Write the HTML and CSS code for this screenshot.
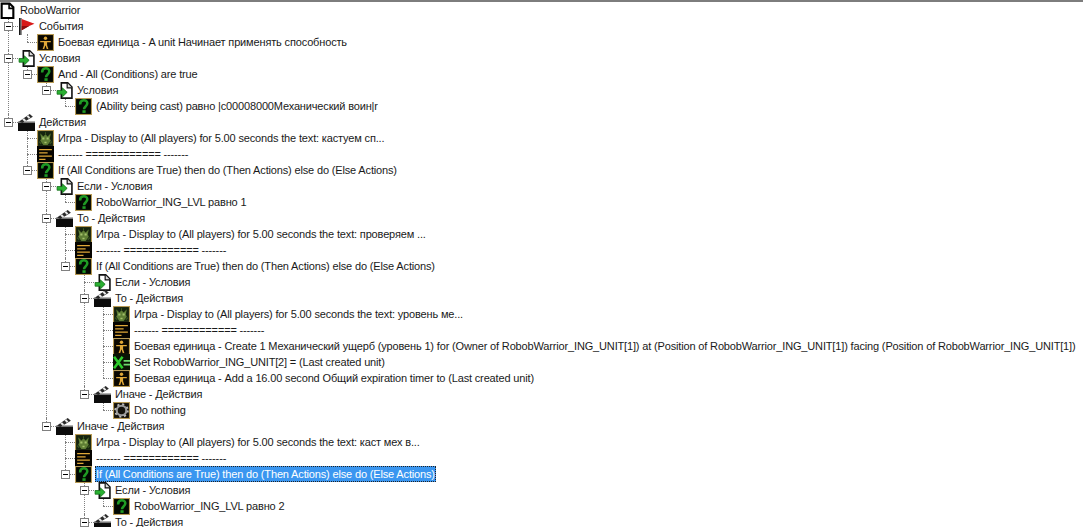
FILE: index.html
```html
<!DOCTYPE html>
<html lang="ru">
<head>
<meta charset="utf-8">
<title>RoboWarrior</title>
<link rel="stylesheet" href="styles.css">
</head>
<body>
<svg class="defs" width="0" height="0" aria-hidden="true">
  <symbol id="i-page" viewBox="0 0 16 16"><path d="M2.500 1.500h7.500l3.500 3.500v10h-11z" fill="#fff" stroke="#000" stroke-width="2"/><path d="M9.500 1.500v4.500h4" fill="none" stroke="#000" stroke-width="1.500"/></symbol>
  <symbol id="i-flag" viewBox="0 0 16 16"><rect x="1" y="0" width="2.500" height="16" fill="#666"/><rect x="1" y="0" width="1" height="16" fill="#111"/><path d="M3.500 1l12 4.500-5 2-7 4z" fill="#d81a1a"/><path d="M3.500 7.500l7 0-7 4z" fill="#8f0d0d"/></symbol>
  <symbol id="i-unit" viewBox="0 0 16 16"><rect x=".5" y=".5" width="15" height="15" fill="#0b0800" stroke="#b79a55"/><circle cx="8" cy="4" r="1.600" fill="#e0a838"/><path d="M3 6.500h10v1.200h-3.500v2.800l1.200 3.500h-1.500l-1.200-3.300-1.200 3.300h-1.500l1.200-3.500v-2.800h-3.500z" fill="#e0a838"/></symbol>
  <symbol id="i-q" viewBox="0 0 16 16"><rect x=".5" y=".5" width="15" height="15" fill="#020802" stroke="#b79a55"/><path d="M4.800 6c0-5 6.800-4.800 6.800-1 0 3-3.100 3-3.100 5.500" fill="none" stroke="#1f9a24" stroke-width="2.400"/><rect x="7" y="11.500" width="3" height="2.500" fill="#1f9a24"/></symbol>
  <symbol id="i-cond" viewBox="0 0 16 16"><path d="M5 .8h6l4 4v10.400h-10z" fill="#fff" stroke="#111" stroke-width="1.500"/><path d="M10.500 1v4.500h4.500" fill="#ddd" stroke="#111" stroke-width="1.100"/><path d="M1 8h5v-2.500l4.500 4.200-4.500 4.300v-2.500h-5z" fill="#2ab032" stroke="#0c6a12" stroke-width=".7"/></symbol>
  <symbol id="i-act" viewBox="0 0 16 16"><rect x="0" y="8" width="16" height="8" fill="#0c0c0c"/><rect x="0" y="7" width="16" height="1.500" fill="#777"/><path d="M1 7l10-7 3 2.500-10 6z" fill="#2a2a2a"/><path d="M4 5l2 2.200 1.700-1-2-2.300zM8 2.200l2 2.300 1.700-1-2-2.400z" fill="#e8e8e8"/></symbol>
  <symbol id="i-game" viewBox="0 0 16 16"><rect x=".5" y=".5" width="15" height="15" fill="#16240e" stroke="#b79a55"/><path d="M3 3l3 3 2-2 2 2 3-3-1 5 1 2-3 4h-4l-3-4 1-2z" fill="#5e7d34"/><path d="M5 7h2v2h-2zM9 7h2v2h-2zM7 11h2v1.500h-2z" fill="#a5c26b"/><path d="M2 11l2 2M14 11l-2 2M8 2v2" stroke="#3c5a22"/></symbol>
  <symbol id="i-note" viewBox="0 0 16 16"><rect width="16" height="16" fill="#060400"/><path d="M2 3.500h12M2 6.500h8M2 9.500h12M2 12.500h6" stroke="#e0a838" stroke-width="1.200"/></symbol>
  <symbol id="i-set" viewBox="0 0 16 16"><rect width="16" height="16" fill="#0a1404"/><path d="M1 2.500l8 11M9 2.500l-8 11" stroke="#2dcc2d" stroke-width="2.400"/><path d="M10 6.500h6M10 10h6" stroke="#6fd86f" stroke-width="1.600"/></symbol>
  <symbol id="i-gear" viewBox="0 0 16 16"><rect x=".5" y=".5" width="15" height="15" fill="#14120c" stroke="#b79a55"/><circle cx="8" cy="8" r="4.500" fill="none" stroke="#9a9a9a" stroke-width="2"/><circle cx="8" cy="8" r="6" fill="none" stroke="#bdbdbd" stroke-width="1.600" stroke-dasharray="2 2.700"/></symbol>
</svg>
<main class="panel">
<ul class="tree root">
<li>
  <div class="row"><svg class="icon"><use href="#i-page"/></svg><span class="label">RoboWarrior</span></div>
  <ul class="tree">
    <li>
      <div class="row"><span class="exp"></span><svg class="icon"><use href="#i-flag"/></svg><span class="label">События</span></div>
      <ul class="tree">
        <li><div class="row"><svg class="icon"><use href="#i-unit"/></svg><span class="label">Боевая единица - A unit Начинает применять способность</span></div></li>
      </ul>
    </li>
    <li>
      <div class="row"><span class="exp"></span><svg class="icon"><use href="#i-cond"/></svg><span class="label">Условия</span></div>
      <ul class="tree">
        <li>
          <div class="row"><span class="exp"></span><svg class="icon"><use href="#i-q"/></svg><span class="label">And - All (Conditions) are true</span></div>
          <ul class="tree">
            <li>
              <div class="row"><span class="exp"></span><svg class="icon"><use href="#i-cond"/></svg><span class="label">Условия</span></div>
              <ul class="tree">
                <li><div class="row"><svg class="icon"><use href="#i-q"/></svg><span class="label">(Ability being cast) равно |c00008000Механический воин|r</span></div></li>
              </ul>
            </li>
          </ul>
        </li>
      </ul>
    </li>
    <li>
      <div class="row"><span class="exp"></span><svg class="icon"><use href="#i-act"/></svg><span class="label">Действия</span></div>
      <ul class="tree">
        <li><div class="row"><svg class="icon"><use href="#i-game"/></svg><span class="label">Игра - Display to (All players) for 5.00 seconds the text: кастуем сп...</span></div></li>
        <li><div class="row"><svg class="icon"><use href="#i-note"/></svg><span class="label">------- ============ -------</span></div></li>
        <li>
          <div class="row"><span class="exp"></span><svg class="icon"><use href="#i-q"/></svg><span class="label">If (All Conditions are True) then do (Then Actions) else do (Else Actions)</span></div>
          <ul class="tree">
            <li>
              <div class="row"><span class="exp"></span><svg class="icon"><use href="#i-cond"/></svg><span class="label">Если - Условия</span></div>
              <ul class="tree">
                <li><div class="row"><svg class="icon"><use href="#i-q"/></svg><span class="label">RoboWarrior_ING_LVL равно 1</span></div></li>
              </ul>
            </li>
            <li>
              <div class="row"><span class="exp"></span><svg class="icon"><use href="#i-act"/></svg><span class="label">То - Действия</span></div>
              <ul class="tree">
                <li><div class="row"><svg class="icon"><use href="#i-game"/></svg><span class="label">Игра - Display to (All players) for 5.00 seconds the text: проверяем ...</span></div></li>
                <li><div class="row"><svg class="icon"><use href="#i-note"/></svg><span class="label">------- ============ -------</span></div></li>
                <li>
                  <div class="row"><span class="exp"></span><svg class="icon"><use href="#i-q"/></svg><span class="label">If (All Conditions are True) then do (Then Actions) else do (Else Actions)</span></div>
                  <ul class="tree">
                    <li><div class="row"><svg class="icon"><use href="#i-cond"/></svg><span class="label">Если - Условия</span></div></li>
                    <li>
                      <div class="row"><span class="exp"></span><svg class="icon"><use href="#i-act"/></svg><span class="label">То - Действия</span></div>
                      <ul class="tree">
                        <li><div class="row"><svg class="icon"><use href="#i-game"/></svg><span class="label">Игра - Display to (All players) for 5.00 seconds the text: уровень ме...</span></div></li>
                        <li><div class="row"><svg class="icon"><use href="#i-note"/></svg><span class="label">------- ============ -------</span></div></li>
                        <li><div class="row"><svg class="icon"><use href="#i-unit"/></svg><span class="label">Боевая единица - Create 1 Механический ущерб (уровень 1) for (Owner of RobobWarrior_ING_UNIT[1]) at (Position of RobobWarrior_ING_UNIT[1]) facing (Position of RobobWarrior_ING_UNIT[1])</span></div></li>
                        <li><div class="row"><svg class="icon"><use href="#i-set"/></svg><span class="label">Set RobobWarrior_ING_UNIT[2] = (Last created unit)</span></div></li>
                        <li><div class="row"><svg class="icon"><use href="#i-unit"/></svg><span class="label">Боевая единица - Add a 16.00 second Общий expiration timer to (Last created unit)</span></div></li>
                      </ul>
                    </li>
                    <li>
                      <div class="row"><span class="exp"></span><svg class="icon"><use href="#i-act"/></svg><span class="label">Иначе - Действия</span></div>
                      <ul class="tree">
                        <li><div class="row"><svg class="icon"><use href="#i-gear"/></svg><span class="label">Do nothing</span></div></li>
                      </ul>
                    </li>
                  </ul>
                </li>
              </ul>
            </li>
            <li>
              <div class="row"><span class="exp"></span><svg class="icon"><use href="#i-act"/></svg><span class="label">Иначе - Действия</span></div>
              <ul class="tree">
                <li><div class="row"><svg class="icon"><use href="#i-game"/></svg><span class="label">Игра - Display to (All players) for 5.00 seconds the text: каст мех в...</span></div></li>
                <li><div class="row"><svg class="icon"><use href="#i-note"/></svg><span class="label">------- ============ -------</span></div></li>
                <li>
                  <div class="row"><span class="exp"></span><svg class="icon"><use href="#i-q"/></svg><span class="label selected">If (All Conditions are True) then do (Then Actions) else do (Else Actions)</span></div>
                  <ul class="tree">
                    <li>
                      <div class="row"><span class="exp"></span><svg class="icon"><use href="#i-cond"/></svg><span class="label">Если - Условия</span></div>
                      <ul class="tree">
                        <li><div class="row"><svg class="icon"><use href="#i-q"/></svg><span class="label">RoboWarrior_ING_LVL равно 2</span></div></li>
                      </ul>
                    </li>
                    <li><div class="row"><span class="exp"></span><svg class="icon"><use href="#i-act"/></svg><span class="label">То - Действия</span></div></li>
                  </ul>
                </li>
              </ul>
            </li>
          </ul>
        </li>
      </ul>
    </li>
  </ul>
</li>
</ul>
</main>
</body>
</html>
```
FILE: styles.css
```css
html, body {
  margin: 0;
  height: 100%;
  overflow: hidden;
  background: #fff;
}
.defs {
  display: block;
  height: 0;
}
.panel {
  height: 527px;
  overflow: hidden;
  box-sizing: border-box;
  border-top: 2px solid #7d7d7d;
  font: 11px/16px "Liberation Sans", Arial, sans-serif;
  letter-spacing: -0.155px;
  color: #1a1a1a;
  white-space: nowrap;
}
.tree {
  list-style: none;
  margin: 0;
  padding: 0 0 0 19px;
}
.root {
  padding-left: 0;
}
.tree > li {
  position: relative;
}
.tree:not(.root) > li::before {
  content: "";
  position: absolute;
  left: -11px;
  top: 8px;
  width: 10px;
  border-top: 1px dotted #808080;
}
.tree:not(.root) > li::after {
  content: "";
  position: absolute;
  left: -11px;
  top: 0;
  bottom: 0;
  border-left: 1px dotted #808080;
}
.tree:not(.root) > li:last-child::after {
  bottom: auto;
  height: 8px;
}
.row {
  position: relative;
  z-index: 1;
  display: flex;
  align-items: center;
  height: 16px;
}
.icon {
  flex: none;
  width: 17px;
  height: 17px;
  margin-left: -1px;
}
.label {
  margin-left: 3px;
  padding: 0 1px;
  height: 16px;
}
.selected {
  background: #3a96f0;
  color: #fff;
  outline: 1px dotted #222;
  outline-offset: -1px;
}
.exp {
  position: absolute;
  left: -15px;
  top: 4px;
  width: 7px;
  height: 7px;
  background: #fff;
  border: 1px solid #808080;
  z-index: 2;
}
.exp::after {
  content: "";
  position: absolute;
  left: 1px;
  top: 3px;
  width: 5px;
  height: 1px;
  background: #000;
}
```
